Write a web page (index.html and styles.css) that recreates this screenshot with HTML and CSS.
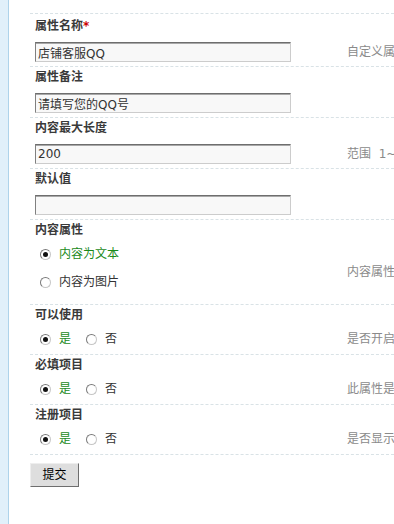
FILE: index.html
```html
<!DOCTYPE html>
<html lang="zh-CN">
<head>
<meta charset="utf-8">
<title>属性编辑</title>
<link rel="stylesheet" href="styles.css">
</head>
<body>
<div class="page">
  <aside class="strip"></aside>
  <main class="content">
    <form class="form">
      <div class="field field-first">
        <div class="label">属性名称<span class="req">*</span></div>
        <div class="line">
          <div class="control"><input class="text" type="text" value="店铺客服QQ"></div>
          <div class="hint">自定义属性名称</div>
        </div>
      </div>
      <div class="field">
        <div class="label">属性备注</div>
        <div class="line">
          <div class="control"><input class="text" type="text" value="请填写您的QQ号"></div>
          <div class="hint"></div>
        </div>
      </div>
      <div class="field">
        <div class="label">内容最大长度</div>
        <div class="line">
          <div class="control"><input class="text" type="text" value="200"></div>
          <div class="hint">范围&nbsp;&nbsp;1~255</div>
        </div>
      </div>
      <div class="field">
        <div class="label">默认值</div>
        <div class="line">
          <div class="control"><input class="text" type="text" value=""></div>
          <div class="hint"></div>
        </div>
      </div>
      <div class="field field-choice">
        <div class="label">内容属性</div>
        <div class="line line-radio">
          <div class="control stack">
            <div class="opt"><span class="radio checked"></span><span class="opt-text on">内容为文本</span></div>
            <div class="opt"><span class="radio"></span><span class="opt-text">内容为图片</span></div>
          </div>
          <div class="hint hint-choice">内容属性设置</div>
        </div>
      </div>
      <div class="field field-toggle">
        <div class="label">可以使用</div>
        <div class="line line-radio">
          <div class="control inline">
            <div class="opt"><span class="radio checked"></span><span class="opt-text on">是</span></div>
            <div class="opt opt-next"><span class="radio"></span><span class="opt-text">否</span></div>
          </div>
          <div class="hint">是否开启此属性</div>
        </div>
      </div>
      <div class="field field-toggle">
        <div class="label">必填项目</div>
        <div class="line line-radio">
          <div class="control inline">
            <div class="opt"><span class="radio checked"></span><span class="opt-text on">是</span></div>
            <div class="opt opt-next"><span class="radio"></span><span class="opt-text">否</span></div>
          </div>
          <div class="hint">此属性是否必填</div>
        </div>
      </div>
      <div class="field field-toggle">
        <div class="label">注册项目</div>
        <div class="line line-radio">
          <div class="control inline">
            <div class="opt"><span class="radio checked"></span><span class="opt-text on">是</span></div>
            <div class="opt opt-next"><span class="radio"></span><span class="opt-text">否</span></div>
          </div>
          <div class="hint">是否显示在注册页</div>
        </div>
      </div>
      <div class="actions">
        <button class="btn" type="button">提交</button>
      </div>
    </form>
  </main>
</div>
</body>
</html>
```
FILE: styles.css
```css
html, body {
  margin: 0;
  padding: 0;
  background: #ffffff;
  overflow: hidden;
}

body {
  font-family: "DejaVu Sans", "Noto Sans CJK SC", sans-serif;
  font-size: 12px;
  color: #333333;
}

.page {
  display: flex;
  width: 394px;
  height: 524px;
}

.strip {
  flex: 0 0 8px;
  background: #e1f0fa;
  border-right: 1px solid #aed3ea;
}

.content {
  flex: 1 1 auto;
  min-width: 0;
  padding-left: 21px;
}

.form {
  margin: 13px 0 0 0;
}

.field {
  border-top: 1px dashed #d9e2e6;
  padding: 0 0 4px 5px;
}

.field-first {
  padding-top: 2px;
}

.field-choice {
  padding-bottom: 8px;
}

.field-toggle {
  padding-bottom: 1px;
}

.label {
  font-weight: bold;
  line-height: 20px;
  height: 20px;
  color: #3a3a3a;
  white-space: nowrap;
}

.req {
  color: #cc0000;
  font-weight: bold;
}

.line {
  display: grid;
  grid-template-columns: 312px minmax(0, 1fr);
  align-items: center;
  margin-top: 6px;
  height: 20px;
}

.line-radio {
  margin-top: 0;
  height: auto;
}

.control {
  min-width: 0;
}

.text {
  display: block;
  box-sizing: border-box;
  width: 256px;
  height: 20px;
  margin: 0;
  padding: 0 2px;
  border-style: solid;
  border-width: 1px;
  border-color: #6e6e6e #cccccc #cccccc #808080;
  box-shadow: inset 0 1px 0 #a8a8a8;
  background: #f8f8f8;
  font-family: "DejaVu Sans", "Noto Sans CJK SC", sans-serif;
  font-size: 12px;
  color: #333333;
  outline: none;
}

.hint {
  white-space: nowrap;
  overflow: hidden;
  color: #8a8a8a;
  line-height: 20px;
  height: 20px;
}

.hint-choice {
  padding-top: 8px;
}

.stack {
  display: flex;
  flex-direction: column;
}

.inline {
  display: flex;
  flex-direction: row;
}

.opt {
  display: flex;
  align-items: center;
  height: 28px;
  line-height: 28px;
}

.opt-next {
  margin-left: 15px;
}

.inline .opt:first-child .radio,
.stack .opt .radio {
  margin-left: 5px;
}

.radio {
  position: relative;
  box-sizing: border-box;
  width: 11px;
  height: 11px;
  border-radius: 50%;
  border: 1px solid;
  border-color: #7a7a7a #c6c6c6 #c6c6c6 #7a7a7a;
  background: #ffffff;
  margin-right: 8px;
  flex: 0 0 11px;
}

.radio.checked::after {
  content: "";
  position: absolute;
  left: 2px;
  top: 2px;
  width: 5px;
  height: 5px;
  border-radius: 50%;
  background: #111111;
}

.opt-text {
  white-space: nowrap;
  color: #333333;
}

.opt-text.on {
  color: #1a8a1a;
}

.actions {
  border-top: 1px dashed #d9e2e6;
  padding-top: 8px;
}

.btn {
  display: block;
  box-sizing: border-box;
  width: 49px;
  height: 24px;
  margin: 0;
  padding: 0;
  background: #dedede;
  border: 1px solid;
  border-color: #eeeeee #6e6e6e #6e6e6e #eeeeee;
  font-family: "DejaVu Sans", "Noto Sans CJK SC", sans-serif;
  font-size: 12px;
  color: #000000;
  line-height: 22px;
}
```
